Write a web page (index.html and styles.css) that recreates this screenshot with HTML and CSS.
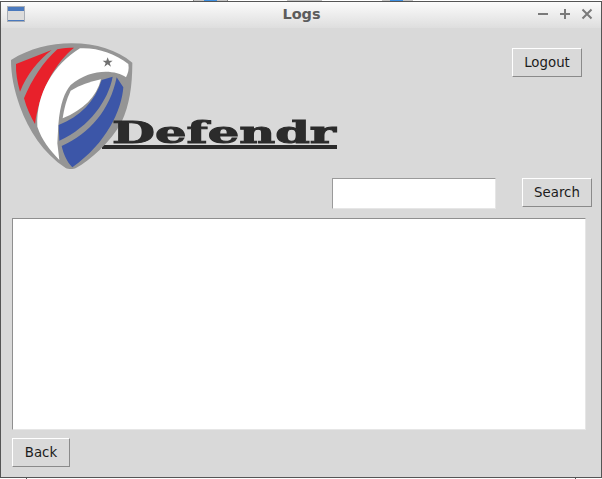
FILE: index.html
```html
<!DOCTYPE html>
<html lang="en">

<head>
    <meta charset="UTF-8">
    <title>Logs</title>
    <link rel="stylesheet" href="styles.css">
</head>

<body>
    <div class="desk-strip"></div>
    <div class="window">
        <div class="titlebar">
            <svg class="app-icon" width="18" height="16" viewBox="0 0 18 16">
                <rect x="0.5" y="0.5" width="17" height="15" fill="#dcdcdc" stroke="#a8adb5"/>
                <rect x="1" y="1" width="16" height="4" fill="#4a79bd"/>
                <rect x="1" y="14" width="16" height="1" fill="#4a79bd"/>
            </svg>
            <span class="title">Logs</span>
            <div class="controls">
                <svg width="12" height="12" viewBox="0 0 12 12"><path d="M1 6H11" stroke="#7a7a7a" stroke-width="2"/></svg>
                <svg width="12" height="12" viewBox="0 0 12 12"><path d="M1 6H11M6 1V11" stroke="#7a7a7a" stroke-width="2"/></svg>
                <svg width="12" height="12" viewBox="0 0 12 12"><path d="M1.5 1.5L10.5 10.5M10.5 1.5L1.5 10.5" stroke="#7a7a7a" stroke-width="2"/></svg>
            </div>
        </div>

        <div class="content">
            <div class="top-row">
                <div class="brand">
                    <svg class="shield" width="122" height="128" viewBox="33 36 366 384">
                        <path d="M33 90C90 55 150 40 215 40C290 40 350 60 397 98C397 170 388 225 365 275C330 340 270 390 228 414C220 418 205 418 197 414C130 370 85 300 60 230C42 180 33 135 33 90Z" fill="#959595"/>
                        <path d="M48 102L155 60C115 90 80 135 60 185C52 155 47 130 48 102Z" fill="#e8212b"/>
                        <path d="M172 58C190 54 205 53 222 53C170 95 120 175 105 282C92 260 80 235 72 205C95 150 130 95 172 58Z" fill="#e8212b"/>
                        <path d="M240 55C290 52 345 70 385 102C388 118 384 130 378 142C345 118 270 115 212 165C195 185 180 220 175 285L172 340L178 390C150 360 125 330 112 290C108 190 160 105 240 55Z" fill="#fff"/>
                        <path d="M212 182C240 165 270 155 303 148C290 200 250 240 188 265C192 235 200 205 212 182Z" fill="#fff"/>
                        <path d="M323 82L327 92L338 92L329 99L333 110L323 103L313 110L317 99L308 92L319 92Z" fill="#707070"/>
                        <path d="M305 150L338 140C325 210 270 290 178 332L176 285C240 260 285 215 305 150Z" fill="#3c56a8"/>
                        <path d="M350 142L370 172C365 240 320 340 217 412C200 395 190 370 185 348C270 310 330 240 350 142Z" fill="#3c56a8"/>
                    </svg>
                    <div class="wordmark"><span class="wordmark-text">Defendr</span></div>
                </div>
                <button class="btn logout">Logout</button>
            </div>

            <div class="search-row">
                <input type="text" class="search-input">
                <button class="btn">Search</button>
            </div>

            <div class="log-box"></div>

            <button class="btn back">Back</button>
        </div>
    </div>
    <div class="desk-strip bottom"></div>
</body>

</html>
```

FILE: styles.css
```css
/* Page and window frame */
html, body {
    margin: 0;
    padding: 0;
    height: 100%;
    background: #fff;
    overflow: hidden;
}

body {
    font-family: "DejaVu Sans", sans-serif;
    font-size: 13.33px;
    color: #1c1c1c;
}

/* Desktop peeking out above and below the window */
.desk-strip {
    height: 1px;
    background: linear-gradient(to right,
        #fff 193px, #888 193px, #888 194px, #c4c4c4 194px, #c4c4c4 204px,
        #3f8fe0 204px, #3f8fe0 217px, #c4c4c4 217px, #c4c4c4 227px,
        #888 227px, #888 228px, #fff 228px, #fff 287px,
        #c4c4c4 287px, #c4c4c4 322px, #fff 322px, #fff 382px,
        #c4c4c4 382px, #c4c4c4 390px, #3f8fe0 390px, #3f8fe0 403px,
        #c4c4c4 403px, #c4c4c4 413px, #fff 413px);
}

.desk-strip.bottom {
    background: linear-gradient(to right,
        #fff 26px, #555 26px, #555 27px, #fff 27px,
        #fff 575px, #555 575px, #555 576px, #fff 576px);
}

.window {
    box-sizing: border-box;
    width: 602px;
    height: 477px;
    display: flex;
    flex-direction: column;
    background: #d9d9d9;
    border: 1px solid #555;
}

/* Title bar */
.titlebar {
    box-sizing: border-box;
    height: 26px;
    flex: none;
    display: grid;
    grid-template-columns: 1fr auto 1fr;
    align-items: center;
    padding: 0 5px 2px 6px;
    background: linear-gradient(#fbfbfb, #dedede);
}

.title {
    font-weight: bold;
    font-size: 14.5px;
    color: #5c5c5c;
}

.controls {
    justify-self: end;
    display: flex;
    gap: 10px;
    margin-right: 3px;
}

/* Buttons */
.btn {
    box-sizing: border-box;
    height: 29px;
    padding: 0;
    width: 70px;
    background: #d9d9d9;
    border: 1px solid;
    border-color: #fff #8a8a8a #8a8a8a #fff;
    font-family: "DejaVu Sans", sans-serif;
    font-size: 13.33px;
    color: #1c1c1c;
}

/* Content */
.content {
    flex: 1;
    display: flex;
    flex-direction: column;
    align-items: flex-start;
    padding: 0 9px 0 11px;
}

.top-row {
    align-self: stretch;
    height: 150px;
    display: flex;
    justify-content: space-between;
    align-items: flex-start;
}

.brand {
    display: flex;
    align-items: flex-start;
    padding-top: 14px;
}

.shield {
    flex: none;
    margin-left: -1px;
    filter: blur(0.4px);
}

.wordmark {
    margin: 79px 0 0 -31px;
    box-sizing: border-box;
    width: 235px;
    height: 28px;
    padding-left: 10px;
    border-bottom: 4px solid #2b2b2b;
    line-height: 24px;
    white-space: nowrap;
}

.wordmark-text {
    display: inline-block;
    font-family: "DejaVu Serif", serif;
    font-weight: bold;
    font-size: 30px;
    color: #2b2b2b;
    -webkit-text-stroke: 1px #2b2b2b;
    transform: scaleX(1.65);
    transform-origin: left;
}

.logout {
    margin: 20px 10px 0 0;
}

.search-row {
    align-self: stretch;
    display: flex;
    justify-content: flex-end;
    align-items: flex-start;
    gap: 26px;
    height: 40px;
}

.search-input {
    box-sizing: border-box;
    width: 164px;
    height: 31px;
    padding: 0;
    background: #fff;
    border: 1px solid;
    border-color: #9a9a9a #e6e6e6 #e6e6e6 #9a9a9a;
    outline: none;
}

.log-box {
    box-sizing: border-box;
    width: 574px;
    height: 212px;
    background: #fff;
    border: 1px solid;
    border-color: #8f8f8f #e6e6e6 #e6e6e6 #8f8f8f;
}

.back {
    width: 58px;
    margin-top: 8px;
}
```
